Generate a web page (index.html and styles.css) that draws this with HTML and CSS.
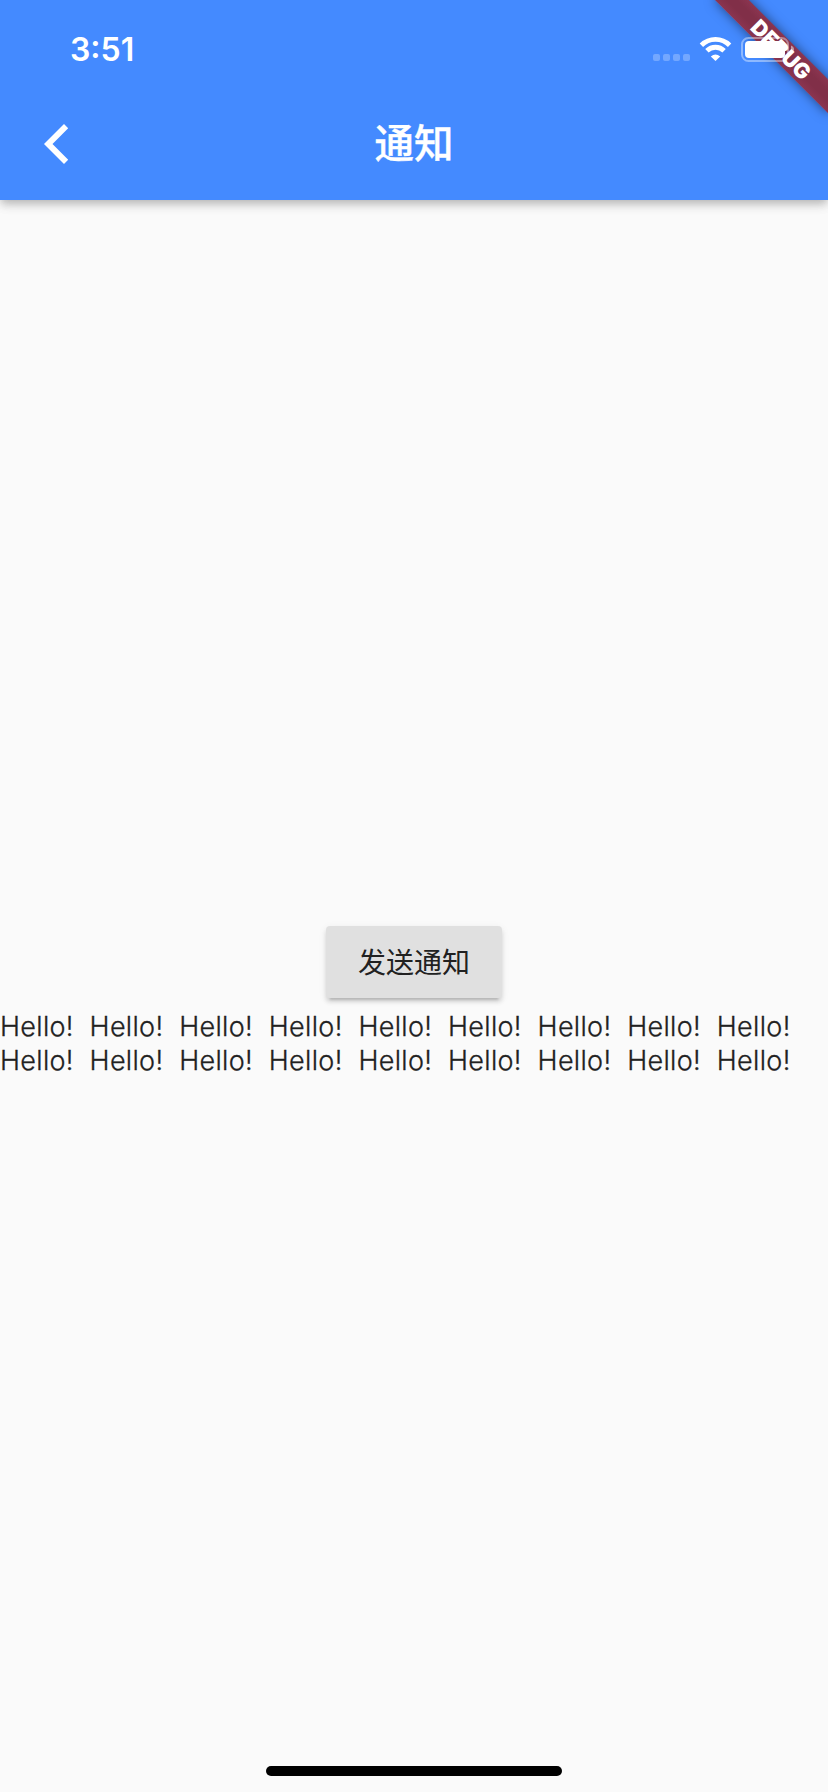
FILE: index.html
```html
<!DOCTYPE html>
<html lang="zh-CN">
<head>
<meta charset="utf-8">
<title>通知</title>
<link rel="stylesheet" href="styles.css">
</head>
<body>
<div class="screen">
  <header class="app-bar">
    <div class="status-bar">
      <span class="time">3:51</span>
      <svg class="status-icons" width="144" height="30" viewBox="0 0 144 30" fill="#fff">
        <g opacity=".25">
          <rect x="1" y="20" width="7" height="7" rx="2"/>
          <rect x="11" y="20" width="7" height="7" rx="2"/>
          <rect x="21" y="20" width="7" height="7" rx="2"/>
          <rect x="31" y="20" width="7" height="7" rx="2"/>
        </g>
        <g fill="none" stroke="#fff" stroke-width="4.8">
          <path d="M49.4 11.2a20 20 0 0 1 28.2 0"/>
          <path d="M54.9 16.8a12.2 12.2 0 0 1 17.2 0"/>
        </g>
        <path d="M63.5 27l-4.7-4.6q4.7-4 9.4 0z"/>
        <rect x="90" y="4" width="46" height="23" rx="6.5" fill="none" stroke="#fff" stroke-width="2" opacity=".4"/>
        <rect x="93" y="7" width="40" height="17" rx="4"/>
        <path d="M139 11.5q3 1.200 3 4t-3 4z" opacity=".5"/>
      </svg>
    </div>
    <div class="toolbar">
      <svg class="back" width="24" height="40" viewBox="0 0 24 40"><path d="M20 0l4.200 4.200L8.500 20l15.700 15.800L20 40 0 20z" fill="#fff"/></svg>
      <h1 class="title">通知</h1>
    </div>
  </header>
  <main class="content">
    <button class="send">发送通知</button>
    <p class="messages">Hello!&nbsp; Hello!&nbsp; Hello!&nbsp; Hello!&nbsp; Hello!&nbsp; Hello!&nbsp; Hello!&nbsp; Hello!&nbsp; Hello!<br>Hello!&nbsp; Hello!&nbsp; Hello!&nbsp; Hello!&nbsp; Hello!&nbsp; Hello!&nbsp; Hello!&nbsp; Hello!&nbsp; Hello!</p>
  </main>
  <div class="debug-banner">DEBUG</div>
  <div class="home-indicator"></div>
</div>
</body>
</html>
```
FILE: styles.css
```css
body {
  margin: 0;
}

.screen {
  position: relative;
  display: flex;
  flex-direction: column;
  width: 828px;
  height: 1792px;
  overflow: hidden;
  background: #fafafa;
  color: #212121;
  font-family: Inter, "Noto Sans CJK SC", sans-serif;
}

.app-bar {
  height: 200px;
  background: #448aff;
  color: #fff;
  box-shadow: 0 4px 8px -2px rgba(0, 0, 0, .17), 0 6px 9px rgba(0, 0, 0, .1), 0 2px 16px rgba(0, 0, 0, .07);
}

.status-bar {
  display: flex;
  justify-content: space-between;
  height: 88px;
  padding: 0 32px 0 70px;
  box-sizing: border-box;
}

.time {
  padding-top: 30px;
  font-size: 32px;
  font-weight: 600;
  line-height: 40px;
}

.status-icons {
  position: relative;
  z-index: 2;
  margin-top: 34px;
}

.toolbar {
  display: grid;
  grid-template-columns: 1fr auto 1fr;
  align-items: center;
  height: 112px;
  padding: 0 44px;
}

.back {
  overflow: visible;
}

.title {
  margin: 0;
  font-size: 39.5px;
  font-weight: 500;
  line-height: 56px;
  -webkit-text-stroke: .4px #fff;
}

.content {
  display: flex;
  flex: 1;
  flex-direction: column;
  align-items: center;
  justify-content: center;
}

.send {
  width: 176px;
  height: 72px;
  margin: 12px 0;
  padding: 0 0 2px;
  border: 0;
  border-radius: 4px;
  background: #e0e0e0;
  color: #212121;
  font: 400 28px/40px "Noto Sans CJK SC", sans-serif;
  box-shadow: 0 6px 2px -4px rgba(0, 0, 0, .13), 0 4px 4px rgba(0, 0, 0, .12), 0 2px 8px rgba(0, 0, 0, .07);
}

.messages {
  align-self: stretch;
  margin: 0;
  font-size: 27px;
  font-weight: 300;
  line-height: 34px;
  letter-spacing: .32px;
  white-space: nowrap;
  -webkit-text-stroke: .3px #212121;
}

.debug-banner {
  position: absolute;
  top: 56px;
  left: 748px;
  width: 160px;
  height: 24px;
  padding-left: 4px;
  box-sizing: border-box;
  transform: rotate(45deg);
  transform-origin: 80px -56px;
  background: linear-gradient(#8b3550, #812f48 35%, #812f48 65%, #8b3550);
  color: #fff;
  font-size: 21.4px;
  font-weight: 900;
  line-height: 24px;
  text-align: center;
  box-shadow: 0 0 12px rgba(0, 0, 0, .5);
}

.home-indicator {
  position: absolute;
  bottom: 16px;
  left: 266px;
  width: 296px;
  height: 10px;
  border-radius: 5px;
  background: #000;
}
```
